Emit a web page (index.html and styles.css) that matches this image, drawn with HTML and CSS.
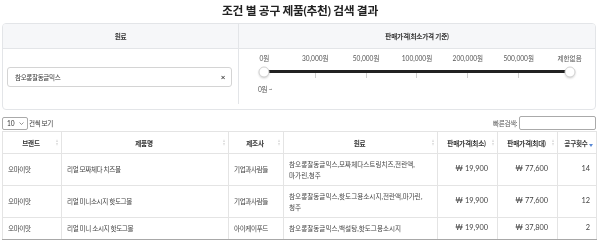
FILE: index.html
```html
<!DOCTYPE html>
<html lang="ko">
<head>
  <meta charset="UTF-8">
  <meta name="viewport" content="width=device-width, initial-scale=1.0">
  <title>조건 별 공구 제품(추천) 검색 결과</title>
  <link rel="stylesheet" href="styles.css">
</head>
<body>
  <h1 class="title">조건 별 공구 제품(추천) 검색 결과</h1>

  <div class="filter">
    <div class="filter-head col-left">원료</div>
    <div class="filter-head">판매가격(최소가격 기준)</div>
    <div class="filter-body col-left keyword">
      <div class="tag-input">
        <span>참오롱찰동글믹스</span>
        <span class="clear">&times;</span>
      </div>
    </div>
    <div class="filter-body price">
      <div class="price-labels">
        <span>0원</span>
        <span>30,000원</span>
        <span>50,000원</span>
        <span>100,000원</span>
        <span>200,000원</span>
        <span>500,000원</span>
        <span>제한없음</span>
      </div>
      <div class="price-track">
        <span class="handle from"></span>
        <span class="handle to"></span>
      </div>
      <div class="price-ticks">
        <span></span><span></span><span></span><span></span><span></span><span></span><span></span>
      </div>
      <div class="price-value">0원 ~</div>
    </div>
  </div>

  <div class="table-tools">
    <div class="length">
      <span class="length-select">10
        <svg width="5" height="3" viewBox="0 0 5 3"><polyline points="0.5,0.5 2.5,2.5 4.5,0.5" fill="none" stroke="#777" stroke-width="0.8"/></svg>
      </span>
      건씩 보기
    </div>
    <div class="search">빠른검색: <span class="search-box"></span></div>
  </div>

  <table class="result">
    <colgroup>
      <col class="w-brand">
      <col class="w-name">
      <col class="w-maker">
      <col class="w-material">
      <col class="w-price">
      <col class="w-price">
      <col class="w-count">
    </colgroup>
    <thead>
      <tr>
        <th>브랜드</th>
        <th>제품명</th>
        <th>제조사</th>
        <th>원료</th>
        <th>판매가격(최소)</th>
        <th>판매가격(최대)</th>
        <th class="sorted">공구횟수</th>
      </tr>
    </thead>
    <tbody>
      <tr>
        <td>오마이맛</td>
        <td>리얼 모짜체다 치즈볼</td>
        <td>기업과사람들</td>
        <td class="material">참오롱찰동글믹스,모짜체다스트링치즈,전란액,<br>마가린,청주</td>
        <td class="num">₩ 19,900</td>
        <td class="num">₩ 77,600</td>
        <td class="num count">14</td>
      </tr>
      <tr>
        <td>오마이맛</td>
        <td>리얼 미니소시지 핫도그볼</td>
        <td>기업과사람들</td>
        <td class="material">참오롱찰동글믹스,핫도그용소시지,전란액,마가린,<br>청주</td>
        <td class="num">₩ 19,900</td>
        <td class="num">₩ 77,600</td>
        <td class="num count">12</td>
      </tr>
      <tr>
        <td>오마이맛</td>
        <td>리얼 미니 소시지 핫도그볼</td>
        <td>아이케이푸드</td>
        <td class="material">참오롱찰동글믹스,백설탕,핫도그용소시지</td>
        <td class="num">₩ 19,900</td>
        <td class="num">₩ 37,800</td>
        <td class="num count">2</td>
      </tr>
    </tbody>
  </table>
</body>
</html>
```

FILE: styles.css
```css
body {
  margin: 0;
  background-color: #fff;
  color: #444;
  font-family: "Lato", "Noto Sans CJK KR", sans-serif;
  font-size: 6.6px;
  letter-spacing: -0.4px;
  will-change: transform; /* grey text antialiasing */
}

.title {
  margin: 0;
  height: 22px;
  line-height: 22px;
  text-align: center;
  font-size: 11.8px;
  font-weight: 700;
  letter-spacing: -0.3px;
  color: #222;
}

/* search conditions box */
.filter {
  display: grid;
  grid-template-columns: 236px 1fr;
  margin: 1px 4px 0 2px;
  border: 1px solid #e3e5e8;
  border-radius: 4px;
  overflow: hidden;
}

.filter-head {
  display: flex;
  align-items: center;
  justify-content: center;
  height: 24px;
  background-color: #f6f7f9;
  border-bottom: 1px solid #e3e5e8;
  font-weight: 700;
  letter-spacing: -0.2px;
  color: #333;
}

.col-left {
  border-right: 1px solid #e3e5e8;
}

.filter-body {
  height: 55px;
}

.keyword {
  display: flex;
  align-items: center;
  padding: 0 6px 0 4px;
}

.tag-input {
  display: flex;
  flex: 1;
  align-items: center;
  justify-content: space-between;
  height: 18px;
  padding: 0 6px 0 7px;
  border: 1px solid #d4d4d4;
  border-radius: 3px;
  color: #333;
}

.tag-input .clear {
  font-size: 8px;
  font-weight: 700;
  color: #444;
}

.price {
  padding-top: 5px;
  color: #555;
}

.price-labels,
.price-ticks {
  display: grid;
  grid-template-columns: repeat(7, 1fr);
  text-align: center;
}

.price-labels {
  line-height: 8px;
  letter-spacing: 0;
}

.price-track {
  position: relative;
  height: 3px;
  margin: 8px calc(100% / 14) 0;
  background-color: #222;
  border-radius: 2px;
}

.handle {
  position: absolute;
  top: 50%;
  width: 11px;
  height: 11px;
  background-color: #fff;
  border: 1px solid #d0d0d0;
  border-radius: 50%;
  box-shadow: 0 1px 2px rgba(0, 0, 0, 0.15);
  transform: translate(-50%, -50%);
  box-sizing: border-box;
}

.handle.from {
  left: 0;
}

.handle.to {
  left: 100%;
}

.price-ticks {
  height: 5px;
}

.price-ticks span {
  background: linear-gradient(#cfcfcf, #cfcfcf) center / 1px 100% no-repeat;
}

.price-ticks span:first-child,
.price-ticks span:last-child {
  background: none;
}

.price-value {
  margin-top: 7px;
  padding-left: 19px;
  line-height: 8px;
}

/* table controls */
.table-tools {
  display: flex;
  align-items: center;
  justify-content: space-between;
  height: 14px;
  margin: 6px 4px 1px 2px;
  color: #333;
}

.length {
  display: flex;
  align-items: center;
  gap: 1px;
}

.length-select {
  display: inline-flex;
  align-items: center;
  justify-content: space-between;
  box-sizing: border-box;
  width: 26px;
  height: 13px;
  padding: 0 3px 0 4px;
  border: 1px solid #aaa;
  border-radius: 2px;
  letter-spacing: 0;
}

.search {
  display: flex;
  align-items: center;
  gap: 2px;
  color: #555;
}

.search-box {
  box-sizing: border-box;
  width: 77px;
  height: 14px;
  border: 1px solid #aaa;
  border-radius: 2px;
}

/* result table */
.result {
  width: 594px;
  margin-left: 2px;
  border-collapse: collapse;
  table-layout: fixed;
}

.w-brand { width: 59px; }
.w-name { width: 167px; }
.w-maker { width: 55px; }
.w-material { width: 154px; }
.w-price { width: 60px; }
.w-count { width: 39px; }

.result th,
.result td {
  border: 1px solid #e4e4e4;
}

.result th {
  position: relative;
  height: 21px;
  padding: 0 7px 0 5px;
  font-weight: 700;
  letter-spacing: -0.2px;
  color: #333;
  text-align: center;
}

/* sort arrows */
.result th::before,
.result th::after {
  content: "";
  position: absolute;
  right: 3px;
  border-left: 1.5px solid transparent;
  border-right: 1.5px solid transparent;
}

.result th::before {
  top: 7px;
  border-bottom: 3px solid #dcdcdc;
}

.result th::after {
  top: 11px;
  border-top: 3px solid #dcdcdc;
}

.result th.sorted::before {
  display: none;
}

.result th.sorted::after {
  top: 12px;
  right: 3px;
  border-left-width: 2px;
  border-right-width: 2px;
  border-top: 3px solid #5b8ad6;
}

.result td {
  padding: 5px;
  line-height: 10.5px;
  vertical-align: middle;
}

.result td.material {
  letter-spacing: 0;
}

.result td.num {
  padding-right: 9px;
  font-size: 7.4px;
  letter-spacing: 0;
  text-align: right;
}

.result td.count {
  padding-right: 6px;
}

.result tbody tr:last-child td {
  border-bottom: 2px solid #a8a8a8;
}
```
